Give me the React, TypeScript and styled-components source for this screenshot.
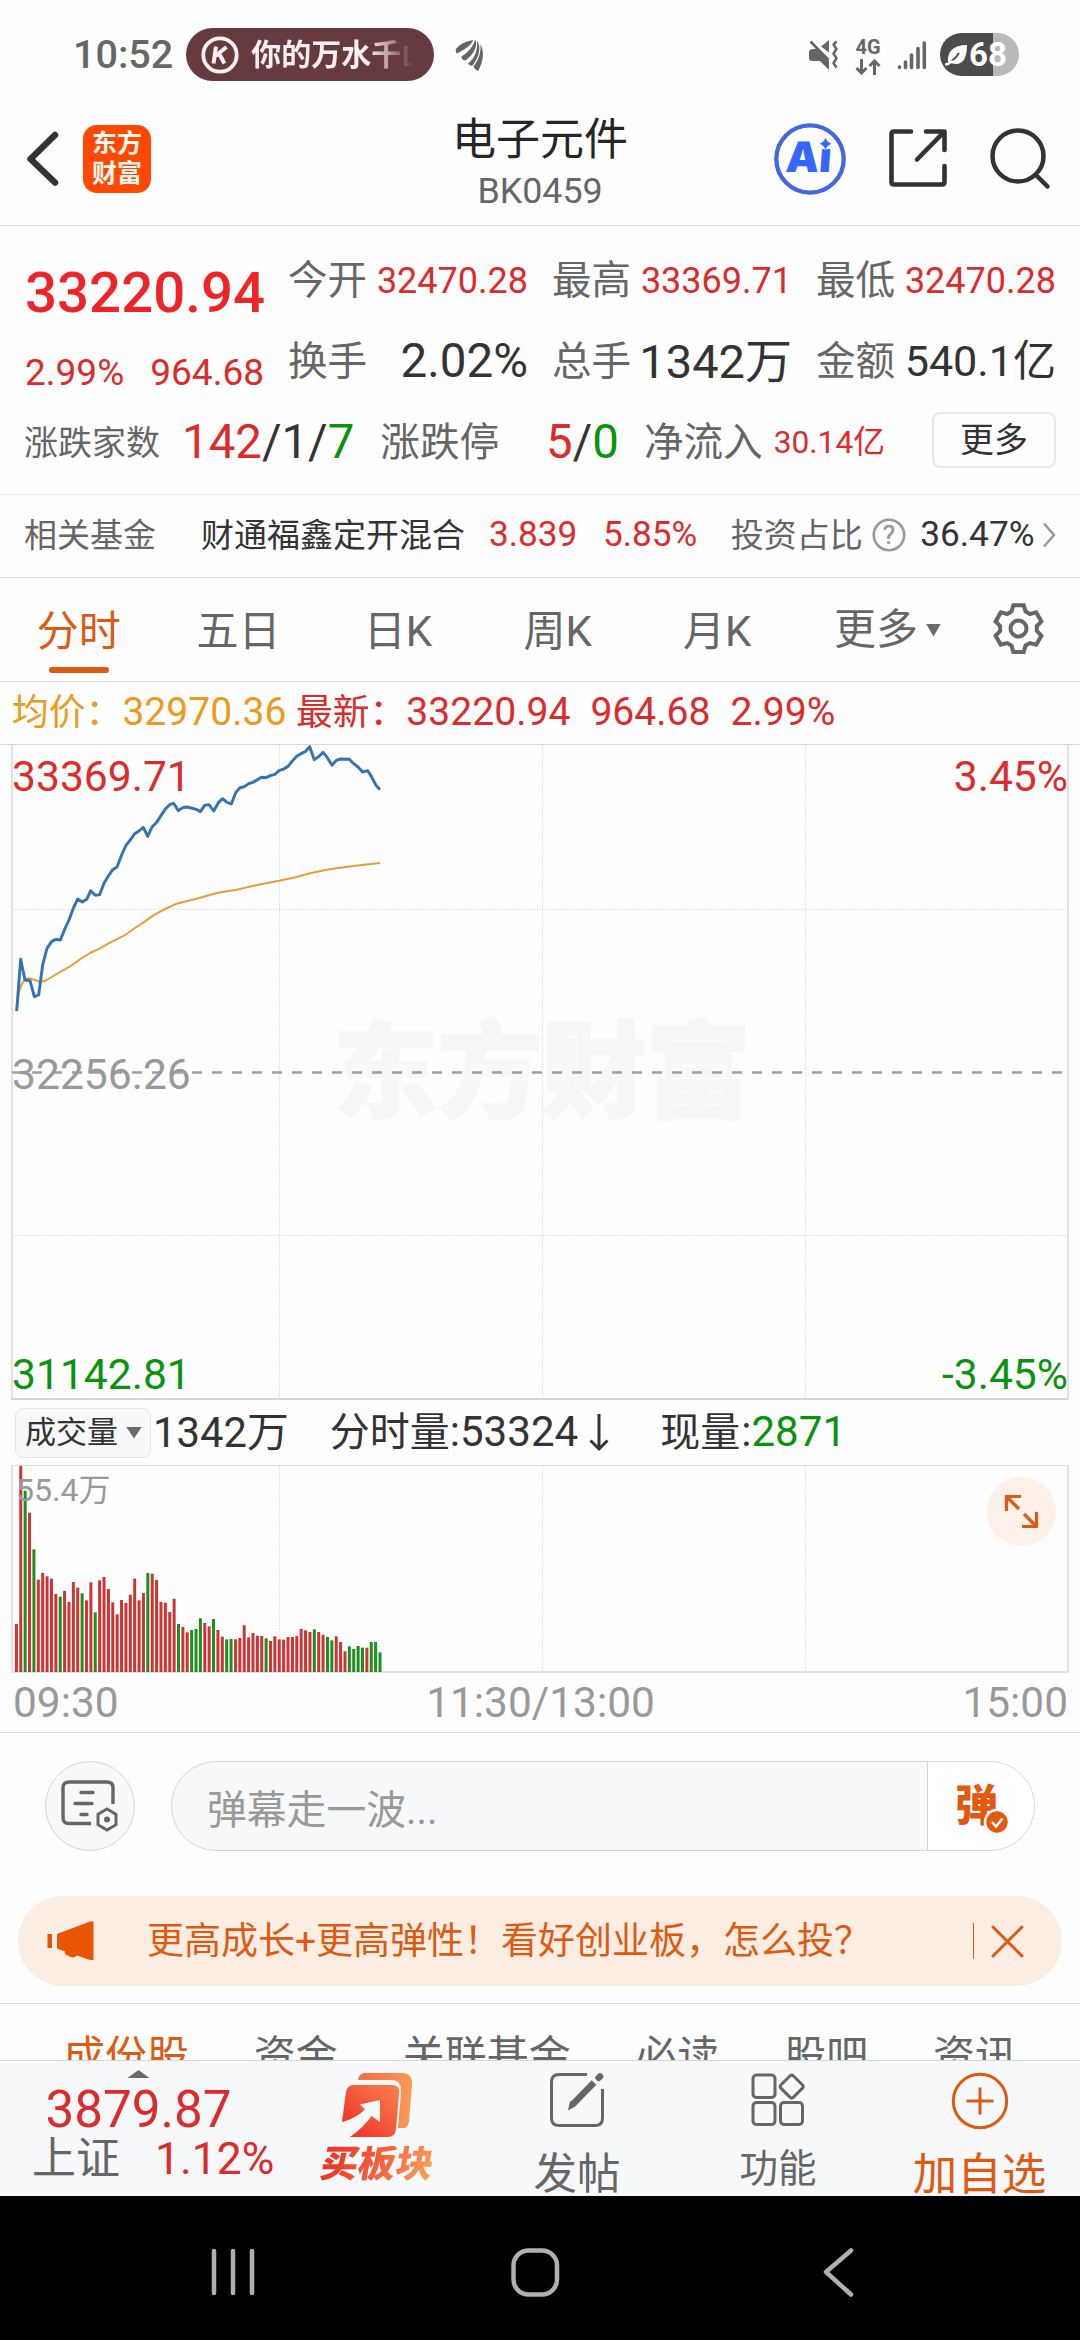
import React from "react";
import styled, { createGlobalStyle } from "styled-components";

const RED = "#dc2b2c";
const GREEN = "#0b930f";
const ORANGE = "#dd5a12";
const INK = "#333333";
const GREY = "#666666";
const MUTED = "#999999";
const LINE = "#d6d8da";

const GlobalStyle = createGlobalStyle`
  html, body { margin: 0; padding: 0; background: #fefefe; }
  *, *::before, *::after { box-sizing: border-box; }
  svg { display: block; flex: none; }
`;

const Screen = styled.main`
  width: 1080px;
  height: 2340px;
  display: flex;
  flex-direction: column;
  overflow: hidden;
  background: #fefefe;
  color: ${INK};
  font-family: Roboto, "Noto Sans CJK SC", sans-serif;
  line-height: 1;
  white-space: nowrap;
`;

const Txt = styled.span<{ $size: number; $color?: string; $weight?: number; $ml?: number; $dy?: number }>`
  flex: none;
  font-size: ${(p) => p.$size}px;
  color: ${(p) => p.$color ?? "inherit"};
  font-weight: ${(p) => p.$weight ?? 400};
  margin-left: ${(p) => p.$ml ?? 0}px;
  padding-top: ${(p) => p.$dy ?? 0}px;
`;

/* ---------- status bar ---------- */

const StatusBar = styled.div`
  height: 108px;
  flex: none;
  display: flex;
  align-items: center;
  padding: 1px 61px 0 73px;
  color: ${GREY};
`;

const NowPlaying = styled.div`
  width: 248px;
  height: 53px;
  margin-left: 13px;
  border-radius: 27px;
  background: #663a3f;
  display: flex;
  align-items: center;
  padding-left: 15px;
  gap: 12px;
`;

const SongTitle = styled.span`
  width: 163px;
  overflow: hidden;
  font-size: 30px;
  line-height: 40px;
  font-weight: 700;
  color: #fbeff2;
  mask-image: linear-gradient(90deg, #000 118px, transparent 162px);
`;

const StatusRight = styled.div`
  margin-left: auto;
  display: flex;
  align-items: center;
`;

const Network = styled.div`
  display: flex;
  flex-direction: column;
  align-items: center;
  gap: 2px;
  width: 28px;
  margin: 2px 15px 0 15px;
  font-size: 20px;
  font-weight: 700;
`;

const Battery = styled.div`
  width: 79px;
  height: 43px;
  margin-left: 13px;
  border-radius: 22px;
  background: linear-gradient(90deg, #4c4c4c 53.5px, #b9b9b9 53.5px);
  display: flex;
  align-items: center;
  padding-left: 5px;
  gap: 1px;
  color: #fff;
  font-size: 33px;
  font-weight: 700;
`;

/* ---------- title bar ---------- */

const TitleBar = styled.header`
  height: 118px;
  flex: none;
  display: grid;
  grid-template-columns: 1fr auto 1fr;
  border-bottom: 1px solid ${LINE};
`;

const TitleLeft = styled.div`
  display: flex;
  align-items: flex-start;
  padding: 17px 0 0 26px;
`;

const AppLogo = styled.div`
  width: 68px;
  height: 68px;
  margin-left: 23px;
  border-radius: 14px;
  background: #ff4800;
  color: #fff6f0;
  display: flex;
  flex-direction: column;
  align-items: center;
  padding-top: 4px;
  font-size: 25px;
  line-height: 30px;
  font-weight: 700;
`;

const TitleMiddle = styled.div`
  display: flex;
  flex-direction: column;
  align-items: center;
  padding-top: 10px;
  gap: 7px;
`;

const TitleRight = styled.div`
  display: flex;
  justify-content: flex-end;
  align-items: flex-start;
  padding: 14px 28px 0 0;
`;

/* ---------- quote summary ---------- */

const Summary = styled.section`
  height: 269px;
  flex: none;
  border-bottom: 1px solid #e8eaec;
`;

const SummaryTop = styled.div`
  height: 176px;
  display: grid;
  grid-template-columns: 239px 1fr;
  column-gap: 24px;
  padding: 14px 24px 0 25px;
`;

const PriceColumn = styled.div`
  display: flex;
  flex-direction: column;
  padding-top: 25px;
`;

const ChangeRow = styled.div`
  display: flex;
  justify-content: space-between;
  padding-top: 33px;
`;

const StatGrid = styled.div`
  display: grid;
  grid-template-columns: repeat(3, 240px);
  grid-template-rows: 81px 81px;
  column-gap: 24px;
`;

const StatCell = styled.div`
  display: flex;
  align-items: center;
  justify-content: space-between;
`;

const SummaryBottom = styled.div`
  height: 81px;
  display: flex;
  align-items: center;
  padding: 0 24px;
`;

const MoreButton = styled.button`
  width: 124px;
  height: 56px;
  margin: -5px 0 0 auto;
  padding: 0;
  border: 2px solid #e6e8eb;
  border-radius: 8px;
  background: transparent;
  color: ${INK};
  font: 400 34px/1 Roboto, "Noto Sans CJK SC", sans-serif;
`;

const FundRow = styled.div`
  height: 83px;
  flex: none;
  display: flex;
  align-items: center;
  padding: 0 24px 2px;
  border-bottom: 1px solid ${LINE};
`;

/* ---------- period tabs ---------- */

const PeriodTabs = styled.nav`
  height: 104px;
  flex: none;
  display: flex;
  border-bottom: 1px solid ${LINE};
`;

const PeriodTab = styled.div<{ $active?: boolean }>`
  width: 159.6px;
  flex: none;
  display: flex;
  flex-direction: column;
  align-items: center;
  padding: 33px 2px 0 0;
  font-size: 42px;
  color: ${(p) => (p.$active ? ORANGE : GREY)};
  &::after {
    content: "";
    width: 60px;
    height: 6px;
    margin-top: 14px;
    border-radius: 3px;
    background: ${(p) => (p.$active ? ORANGE : "transparent")};
  }
`;

const MorePeriods = styled.div`
  display: flex;
  align-items: center;
  height: 104px;
  gap: 8px;
  margin-left: 36px;
  font-size: 42px;
  color: ${GREY};
`;

const Triangle = styled.i<{ $w: number; $h: number; $up?: boolean }>`
  flex: none;
  width: ${(p) => p.$w}px;
  height: ${(p) => p.$h}px;
  background: #6b6b6b;
  clip-path: ${(p) => (p.$up ? "polygon(50% 0, 100% 100%, 0 100%)" : "polygon(0 0, 100% 0, 50% 100%)")};
`;

const GearSlot = styled.div`
  margin: 24px 35px 0 auto;
`;

/* ---------- charts ---------- */

const InfoRow = styled.div`
  height: 63px;
  flex: none;
  display: flex;
  align-items: center;
  padding-left: 12px;
  border-bottom: 1px solid ${LINE};
`;

const ChartBox = styled.div<{ $h: number }>`
  position: relative;
  flex: none;
  height: ${(p) => p.$h}px;
`;

const Overlay = styled.span<{ $top: number; $right?: boolean; $size?: number; $left?: number; $color: string }>`
  position: absolute;
  top: ${(p) => p.$top}px;
  ${(p) => (p.$right ? "right: 12px;" : `left: ${p.$left ?? 12}px;`)}
  font-size: ${(p) => p.$size ?? 42.6}px;
  color: ${(p) => p.$color};
`;

const Watermark = styled.span`
  position: absolute;
  top: 277px;
  left: 333px;
  font-size: 104.5px;
  font-weight: 900;
  color: #f7f7f7;
  -webkit-text-stroke: 2px #f7f7f7;
`;

const ChartSvg = styled.svg`
  position: absolute;
  inset: 0;
`;

const VolumeHeader = styled.div`
  height: 65px;
  flex: none;
  display: flex;
  align-items: center;
  padding-left: 15px;
`;

const IndicatorButton = styled.div`
  width: 136px;
  height: 50px;
  display: flex;
  align-items: center;
  gap: 8px;
  padding-left: 9px;
  border: 1px solid #e2e5ea;
  border-radius: 8px;
  background: #f7f8fa;
  font-size: 31px;
`;

const ExpandButton = styled.div`
  position: absolute;
  top: 12px;
  left: 987px;
  width: 69px;
  height: 69px;
  border-radius: 50%;
  background: #fff0e9;
  display: grid;
  place-items: center;
`;

const TimeAxis = styled.div`
  height: 60px;
  flex: none;
  display: grid;
  grid-template-columns: 1fr auto 1fr;
  align-items: center;
  padding: 1px 12px 0 13px;
  border-bottom: 1px solid ${LINE};
  font-size: 42.4px;
  color: ${MUTED};
  span:last-child {
    text-align: right;
  }
`;

/* ---------- comment bar and banner ---------- */

const CommentBar = styled.div`
  height: 163px;
  flex: none;
  display: flex;
  align-items: flex-start;
  padding: 28px 45px 0;
  gap: 36px;
`;

const RoundButton = styled.div`
  width: 90px;
  height: 90px;
  flex: none;
  border: 1px solid #d2d6da;
  border-radius: 50%;
  background: #f7f8fa;
  display: grid;
  place-items: center;
`;

const CommentField = styled.div`
  flex: 1;
  height: 90px;
  display: flex;
  overflow: hidden;
  border: 1px solid #d2d6da;
  border-radius: 45px;
  background: #f7f8fa;
`;

const Placeholder = styled.div`
  flex: 1;
  display: flex;
  align-items: center;
  padding: 9px 0 0 35px;
  font-size: 39.8px;
  color: ${MUTED};
`;

const DanmuToggle = styled.div`
  position: relative;
  width: 107px;
  border-left: 1px solid #d2d6da;
  background: #fff;
  padding: 23px 0 0 27px;
  font-size: 43px;
  font-weight: 900;
  color: #e2590f;
`;

const CheckBadge = styled.div`
  position: absolute;
  left: 55px;
  top: 46px;
`;

const Banner = styled.div`
  height: 90px;
  flex: none;
  margin: 0 18px 17px;
  border-radius: 45px;
  background: #fcede3;
  display: flex;
  align-items: center;
  padding: 0 38px 0 29px;
  color: ${ORANGE};
`;

const BannerRule = styled.i`
  width: 1px;
  height: 36px;
  margin: 0 17px 0 auto;
  background: ${ORANGE};
`;

const SectionTabs = styled.nav`
  height: 57px;
  flex: none;
  overflow: hidden;
  display: flex;
  align-items: flex-start;
  gap: 64.8px;
  padding: 32px 0 0 63px;
  border-top: 1px solid ${LINE};
  font-size: 42px;
  color: ${GREY};
`;

/* ---------- bottom bars ---------- */

const BottomBar = styled.footer`
  height: 136px;
  flex: none;
  display: flex;
  overflow: hidden;
  border-top: 1px solid ${LINE};
  background: #f7f8fa;
  color: ${GREY};
`;

const IndexPanel = styled.div`
  width: 277px;
  display: flex;
  flex-direction: column;
  align-items: center;
  padding-top: 9px;
`;

const IndexLine = styled.div`
  width: 100%;
  display: flex;
  align-items: center;
  padding-left: 32px;
  margin-top: 2px;
`;

const Action = styled.div<{ $w: number; $size: number; $gap: number; $color?: string }>`
  width: ${(p) => p.$w}px;
  display: flex;
  flex-direction: column;
  align-items: center;
  gap: ${(p) => p.$gap}px;
  padding-top: 11px;
  font-size: ${(p) => p.$size}px;
  color: ${(p) => p.$color ?? GREY};
`;

const BuyLabel = styled.span`
  font-size: 37.5px;
  font-weight: 900;
  transform: skewX(-10deg);
  background: linear-gradient(100deg, #ee3326 5%, #f2603f 50%, #fd9c56 95%);
  background-clip: text;
  -webkit-background-clip: text;
  color: transparent;
`;

const SystemNav = styled.div`
  flex: 1;
  display: flex;
  align-items: flex-start;
  padding: 52px 0 0 211px;
  background: #000;
`;

const Slot = styled.div<{ $ml?: number; $mt?: number }>`
  margin-left: ${(p) => p.$ml ?? 0}px;
  margin-top: ${(p) => p.$mt ?? 0}px;
`;

/* ---------- data ---------- */

const PRICE =
  "50,843 62,688 75,750 90,752 103,800 116,795 128,705 141,655 155,634 168,628 181,630 194,598 207,570 220,535 233,507 247,516 260,508 272,482 286,496 299,494 312,460 325,438 338,419 351,411 365,375 378,346 391,330 404,311 417,303 430,292 443,319 456,291 470,277 483,257 496,237 509,224 521,220 535,242 548,233 560,231 574,234 588,238 601,245 614,226 627,224 641,243 655,218 668,206 681,217 694,222 707,188 719,174 733,170 746,161 759,157 772,149 785,142 798,143 811,137 825,133 838,121 852,117 864,109 877,93 890,79 903,71 916,65 929,50 943,89 956,80 969,67 982,83 996,106 1009,91 1022,87 1048,88 1061,101 1074,111 1088,126 1103,122 1114,139 1127,164 1140,179";

const AVERAGE =
  "50,843 56,790 64,765 75,748 90,745 105,750 118,755 135,753 165,735 208,711 240,688 270,669 300,655 330,638 355,626 380,612 405,594 430,578 460,556 495,537 530,521 590,506 650,489 710,479 790,461 838,452 890,441 930,430 980,419 1030,412 1080,406 1140,399";

const VOLUME =
  "732r,258r,332g,398r,508g,599r,579r,589r,596r,642r,650g,633r,666r,606r,623r,640g,661r,607r,697g,601r,591r,627r,667r,703r,660r,669r,644r,596r,661r,639r,579g,581r,600r,666r,668r,696r,656r,732g,741r,757r,750g,747g,715g,729r,739r,717g,750r,770r,778g,777g,778r,774r,736r,772r,759r,767r,768r,775g,783r,769r,778r,779r,771r,771r,768r,747r,751r,756r,748g,756r,764r,771g,781g,769r,786r,814r,799g,807g,798g,803g,803r,786g,786g,817g"
    .split(",")
    .map((v) => ({ height: (876 - parseInt(v, 10)) / 3, up: v.endsWith("r") }));

const STATS = [
  { label: "今开", value: "32470.28", size: 36, color: RED },
  { label: "最高", value: "33369.71", size: 36, color: RED },
  { label: "最低", value: "32470.28", size: 36, color: RED },
  { label: "换手", value: "2.02%", size: 47.5, color: INK },
  { label: "总手", value: "1342万", size: 47, color: INK },
  { label: "金额", value: "540.1亿", size: 43.1, color: INK },
];

const GRID_X = [279.5, 542.5, 805.5];

/* ---------- icons ---------- */

const PlayerIcon = () => (
  <svg width="38" height="38" viewBox="0 0 38 38" fill="none" stroke="#fbeff2">
    <circle cx="19" cy="19" r="16.7" strokeWidth="3.8" />
    <path d="M15 10.5 12.5 27.5M25.5 11 14.5 20M18 17.5l5.5 10" strokeWidth="4" />
  </svg>
);

const WingIcon = () => (
  <svg width="30" height="34" viewBox="0 0 30 34" fill="#666">
    <path d="M1 11C5 5 13 3 18 2 17 7 9 12 2 15.500 .5 14.500 .5 12 1 11Z" />
    <path d="M6.500 18.500C12 15 18.500 9 20 1.500c3.500 5.500-1 15-9.500 21-2.500-.5-4.500-1.500-4-4Z" />
    <path d="M13 25.500c6.500-5 10-13 9-23 4.500 6 2.500 17-5 25.500-1.500-.5-3-1-4-2.500Z" />
    <path d="M18.500 28c5.500-6 7.500-14 7-22 4 8 3 18-2.500 27-2-1-4.500-3-4.500-5Z" />
  </svg>
);

const MutedIcon = () => (
  <svg width="31" height="30" viewBox="0 0 31 30">
    <path d="M1 11q1-2 4-2h4l12 12v9l-9-9H4q-3 0-3-3ZM13 6.500 21 0v12.500Z" fill="#666" />
    <path d="M2.500 1.500 20.500 20" stroke="#666" strokeWidth="2.600" />
    <path d="m28.500 1.500-3 3 3 4.500-3 4.500 3 5-3 4.500 3 4.500" fill="none" stroke="#666" strokeWidth="2.500" strokeLinejoin="round" />
  </svg>
);

const DataArrows = () => (
  <svg width="26" height="16" viewBox="0 0 26 16" fill="none" stroke="#666" strokeWidth="3">
    <path d="M6.500 0v14M1.500 9l5 5 5-5M19.500 16V2M14.500 7l5-5 5 5" />
  </svg>
);

const SignalIcon = () => (
  <svg width="30" height="30" viewBox="0 0 30 30" stroke="#666" strokeWidth="3.600" strokeLinecap="round">
    <path d="M2.500 27v.5M8.500 22v5.500M14.500 15v12.500M21 8.500v19M27.300 3v24.500" />
  </svg>
);

const LeafIcon = () => (
  <svg width="23" height="22" viewBox="0 0 23 22">
    <path d="M3 18C2 8 8 1 22 1c0 11-3 19-11 19-3 0-5-1-6-2Z" fill="#fff" />
    <path d="M6 17.500C9 15.500 12 12.500 14 9" fill="none" stroke="#4c4c4c" strokeWidth="2" />
    <path d="M1 20.500c2-.5 4-1.500 6-3" fill="none" stroke="#fff" strokeWidth="2.500" strokeLinecap="round" />
  </svg>
);

const AiIcon = () => (
  <svg width="74" height="74" viewBox="0 0 74 74">
    <circle cx="37" cy="37" r="33.700" fill="none" stroke="#4366e3" strokeWidth="4.300" />
    <text x="12" y="50.500" fontFamily="Inter, Roboto, sans-serif" fontSize="42" fontWeight="900" fill="#3566ff" transform="skewX(-4) translate(3.500 0)">Ai</text>
    <circle cx="52.500" cy="19.500" r="8" fill="#fefefe" />
    <path d="M52.500 15.700q1.500 4.500 6 6-4.500 1.500-6 6-1.500-4.500-6-6 4.500-1.500 6-6Z" fill="#3566ff" />
  </svg>
);

const ShareIcon = () => (
  <svg width="60" height="60" viewBox="0 0 60 60" fill="none" stroke="#333" strokeWidth="4.600" strokeLinecap="round" strokeLinejoin="round">
    <path d="M23 3.500H6q-2.500 0-2.500 2.500v48q0 2.500 2.500 2.500h48q2.500 0 2.500-2.500V38M38 3.500h18.500V22M56 4 29 31.500" />
  </svg>
);

const SearchIcon = () => (
  <svg width="62" height="62" viewBox="0 0 62 62" fill="none" stroke="#333" strokeWidth="4.500" strokeLinecap="round">
    <circle cx="28" cy="28" r="25.500" />
    <path d="m46.500 47.500 11 11" />
  </svg>
);

const GearIcon = () => (
  <svg width="53" height="53" viewBox="0 0 53 53" fill="none" stroke="#666" strokeWidth="4" strokeLinejoin="miter">
    <path d="M21.300 3.200h10.400l1.800 6.300 4.300 2.500 6.400-1.600 5.200 9-4.600 4.700v4.900l4.600 4.700-5.200 9-6.400-1.600-4.300 2.500-1.800 6.300H21.300l-1.800-6.300-4.300-2.500-6.400 1.600-5.200-9L8.200 29v-4.900l-4.600-4.700 5.200-9 6.400 1.600 4.300-2.500Z" />
    <circle cx="26.500" cy="26.500" r="8" />
  </svg>
);

const HelpIcon = () => (
  <svg width="34" height="34" viewBox="0 0 34 34">
    <circle cx="17" cy="17" r="15.200" fill="none" stroke="#999" strokeWidth="2.600" />
    <text x="17" y="26" textAnchor="middle" fontFamily="Roboto, sans-serif" fontSize="26" fill="#999" stroke="#999" strokeWidth=".5">?</text>
  </svg>
);

const ExpandIcon = () => (
  <svg width="35" height="35" viewBox="0 0 35 35" fill="none" stroke="#dd5a12" strokeWidth="3.200">
    <path d="M17 2.500H2.500V17M2.500 2.500l12.500 12.500M18 32.500h14.500V18M32.500 32.500 20 20" />
  </svg>
);

const ListSettingsIcon = () => (
  <svg width="58" height="52" viewBox="0 0 58 52" fill="none" stroke="#666" strokeWidth="3.400">
    <path d="M30 43.500H8q-6 0-6-6V8q0-6 6-6h38q6 0 6 6v16" />
    <path d="M20 12.500h12M14 23.500h17M20 34.500h6" strokeLinecap="round" />
    <path d="m46 29 9 5.300v10.400L46 50l-9-5.300V34.300Z" strokeWidth="3" />
    <circle cx="46" cy="39.500" r="3" fill="#666" stroke="none" />
  </svg>
);

const MegaphoneIcon = () => (
  <svg width="48" height="40" viewBox="0 0 48 40" fill="#ea5504">
    <path d="M.5 13H5v14H.5ZM10 13 43 .5h3.500V39H43l-13-4.500q-4 4-9 0-4-1-3-4L10 27.500Z" />
  </svg>
);

const CloseIcon = () => (
  <svg width="33" height="33" viewBox="0 0 33 33" stroke="#dd5a12" strokeWidth="3" strokeLinecap="round">
    <path d="m2 2 29 29M31 2 2 31" />
  </svg>
);

const BuySectorIcon = () => (
  <svg width="72" height="66" viewBox="0 0 72 66">
    <defs>
      <linearGradient id="buy" x1="0" y1="1" x2="1" y2="0">
        <stop offset="0" stopColor="#ee2b23" />
        <stop offset="1" stopColor="#f7834f" />
      </linearGradient>
      <linearGradient id="back" x1="0" y1="0" x2="1" y2="0">
        <stop offset="0" stopColor="#f26a44" />
        <stop offset="1" stopColor="#fd9a55" />
      </linearGradient>
    </defs>
    <path d="M17 8q1-7 7-7h37q11 0 10 12l-3 36q-1 8-7 7h-4l3-35q1-13-10-13Z" fill="url(#back)" />
    <path d="M5 20q1-7 8-7h38q8 0 7 8l-3 36q-1 8-8 8H9q14-10 21.500-21l8.500 6V28l-20 4.500 5 5Q14 47 1 50Z" fill="url(#buy)" />
  </svg>
);

const ComposeIcon = () => (
  <svg width="56" height="56" viewBox="0 0 56 56" fill="none" stroke="#666" strokeWidth="3">
    <path d="M38 2.500H10q-7.500 0-7.500 7.500v36q0 7.500 7.500 7.500h36q7.500 0 7.500-7.500V17" />
    <path d="M45 10.500 24 32" strokeWidth="6.500" />
    <path d="m21 29 6 5-8 4.500Z" fill="#666" stroke="none" />
    <path d="m49.500 6 1.500-1.500" strokeWidth="6.500" strokeLinecap="round" />
    <path d="m44 5.500 6 6" stroke="#f7f8fa" strokeWidth="1.500" />
  </svg>
);

const GridIcon = () => (
  <svg width="54" height="54" viewBox="0 0 54 54" fill="none" stroke="#666" strokeWidth="3" strokeLinejoin="round">
    <rect x="2" y="3" width="22" height="22.500" rx="3.500" />
    <rect x="2" y="30.500" width="22" height="22" rx="3.500" />
    <rect x="29.500" y="30.500" width="22" height="22" rx="3.500" />
    <rect x="32" y="5.800" width="17.500" height="17.500" rx="2.500" transform="rotate(45 40.700 14.500)" />
  </svg>
);

const AddIcon = () => (
  <svg width="58" height="58" viewBox="0 0 58 58" fill="none" stroke="#dd5a12" strokeWidth="3">
    <circle cx="29" cy="29" r="26.700" />
    <path d="M29 15.500v27M15.500 29h27" />
  </svg>
);

/* ---------- chart drawings ---------- */

const PriceChart = () => (
  <ChartSvg width="1080" height="655" viewBox="0 0 1080 655" fill="none">
    <g stroke="#dcdcdc" strokeWidth="1" strokeDasharray="1.500 1.500">
      {GRID_X.map((x) => (
        <path key={x} d={`M${x} 0V653`} />
      ))}
      <path d="M12 164.500H1068M12 490.500H1068" />
    </g>
    <path d="M12 0V654M1068 0V654" stroke="#e2e2e2" strokeWidth="2" />
    <path d="M11 654H1068" stroke="#d6d6d6" strokeWidth="2" />
    <path d="M12 327.500H1068" stroke="#a0a0a0" strokeWidth="2.600" strokeDasharray="10 10" />
    <g transform="translate(0 -15) scale(.33333)" strokeLinejoin="round">
      <polyline points={AVERAGE} stroke="#e3a03a" strokeWidth="6" />
      <polyline points={PRICE} stroke="#3572b0" strokeWidth="8.800" />
    </g>
  </ChartSvg>
);

const VolumeChart = () => (
  <ChartSvg width="1080" height="208" viewBox="0 0 1080 208" fill="none">
    <g stroke="#dcdcdc" strokeWidth="1" strokeDasharray="1.500 1.500">
      {GRID_X.map((x) => (
        <path key={x} d={`M${x} 1V206`} />
      ))}
    </g>
    <path d="M12 .5H1068" stroke="#dedede" />
    <path d="M12 0V207M1068 0V207M11 207H1069" stroke="#e2e2e2" strokeWidth="2" />
    {VOLUME.map((bar, i) => (
      <rect
        key={i}
        x={14.900 + i * 4.381}
        y={207 - bar.height}
        width="3"
        height={bar.height}
        fill={bar.up ? "#cf3434" : "#1e8f1e"}
      />
    ))}
  </ChartSvg>
);

/* ---------- page ---------- */

export default function App() {
  return (
    <Screen>
      <GlobalStyle />

      <StatusBar>
        <Txt $size={39.5} $weight={500}>10:52</Txt>
        <NowPlaying>
          <PlayerIcon />
          <SongTitle>你的万水千山</SongTitle>
        </NowPlaying>
        <Slot $ml={21}>
          <WingIcon />
        </Slot>
        <StatusRight>
          <MutedIcon />
          <Network>
            4G
            <DataArrows />
          </Network>
          <SignalIcon />
          <Battery>
            <LeafIcon />
            68
          </Battery>
        </StatusRight>
      </StatusBar>

      <TitleBar>
        <TitleLeft>
          <svg width="34" height="68" viewBox="0 0 34 68" fill="none" stroke="#333" strokeWidth="6.500" strokeLinecap="round" strokeLinejoin="round">
            <path d="M29 10 4.500 34 29 57.500" />
          </svg>
          <AppLogo>
            <span>东方</span>
            <span>财富</span>
          </AppLogo>
        </TitleLeft>
        <TitleMiddle>
          <Txt $size={44} $color="#262626">电子元件</Txt>
          <Txt $size={35.800} $color={GREY} $dy={5}>BK0459</Txt>
        </TitleMiddle>
        <TitleRight>
          <AiIcon />
          <Slot $ml={41} $mt={6}>
            <ShareIcon />
          </Slot>
          <Slot $ml={42} $mt={6}>
            <SearchIcon />
          </Slot>
        </TitleRight>
      </TitleBar>

      <Summary>
        <SummaryTop>
          <PriceColumn>
            <Txt $size={56.400} $weight={500} $color="#ee2426">33220.94</Txt>
            <ChangeRow>
              <Txt $size={37} $color={RED}>2.99%</Txt>
              <Txt $size={37} $color={RED}>964.68</Txt>
            </ChangeRow>
          </PriceColumn>
          <StatGrid>
            {STATS.map((s) => (
              <StatCell key={s.label}>
                <Txt $size={39.6} $color={GREY}>{s.label}</Txt>
                <Txt $size={s.size} $color={s.color}>{s.value}</Txt>
              </StatCell>
            ))}
          </StatGrid>
        </SummaryTop>
        <SummaryBottom>
          <Txt $size={34} $color={GREY}>涨跌家数</Txt>
          <Txt $size={47.4} $ml={22}>
            <Txt $size={47.4} $color={RED}>142</Txt>/1/<Txt $size={47.4} $color={GREEN}>7</Txt>
          </Txt>
          <Txt $size={39.6} $color={GREY} $ml={26}>涨跌停</Txt>
          <Txt $size={47.4} $ml={47}>
            <Txt $size={47.4} $color={RED}>5</Txt>/<Txt $size={47.4} $color={GREEN}>0</Txt>
          </Txt>
          <Txt $size={39.6} $color={GREY} $ml={25}>净流入</Txt>
          <Txt $size={31.7} $color={RED} $ml={11}>30.14亿</Txt>
          <MoreButton>更多</MoreButton>
        </SummaryBottom>
      </Summary>

      <FundRow>
        <Txt $size={33} $color={GREY}>相关基金</Txt>
        <Txt $size={33} $ml={45}>财通福鑫定开混合</Txt>
        <Txt $size={35.200} $color={RED} $ml={24}>3.839</Txt>
        <Txt $size={35.200} $color={RED} $ml={25.500}>5.85%</Txt>
        <Txt $size={33} $color={GREY} $ml={33.500}>投资占比</Txt>
        <Slot $ml={9}>
          <HelpIcon />
        </Slot>
        <Txt $size={35.200} $ml={14.500}>36.47%</Txt>
        <Slot $ml={8}>
          <svg width="14" height="26" viewBox="0 0 14 26" fill="none" stroke="#999" strokeWidth="2.500">
            <path d="m2 1.500 10 11.500L2 24.500" />
          </svg>
        </Slot>
      </FundRow>

      <PeriodTabs>
        <PeriodTab $active>分时</PeriodTab>
        <PeriodTab>五日</PeriodTab>
        <PeriodTab>日K</PeriodTab>
        <PeriodTab>周K</PeriodTab>
        <PeriodTab>月K</PeriodTab>
        <MorePeriods>
          更多
          <Triangle $w={15} $h={13} />
        </MorePeriods>
        <GearSlot>
          <GearIcon />
        </GearSlot>
      </PeriodTabs>

      <InfoRow>
        <Txt $size={36.800} $color="#eb9a1c">均价：</Txt>
        <Txt $size={39.100} $color="#eb9a1c">32970.36</Txt>
        <Txt $size={36.800} $color={RED} $ml={9.500}>最新：</Txt>
        <Txt $size={39.100} $color={RED}>33220.94</Txt>
        <Txt $size={39.100} $color={RED} $ml={20}>964.68</Txt>
        <Txt $size={39.100} $color={RED} $ml={20}>2.99%</Txt>
      </InfoRow>

      <ChartBox $h={655}>
        <Watermark>东方财富</Watermark>
        <PriceChart />
        <Overlay $top={10} $color={RED}>33369.71</Overlay>
        <Overlay $top={10} $right $color={RED}>3.45%</Overlay>
        <Overlay $top={308} $color={MUTED}>32256.26</Overlay>
        <Overlay $top={608} $color={GREEN}>31142.81</Overlay>
        <Overlay $top={608} $right $color={GREEN}>-3.45%</Overlay>
      </ChartBox>

      <VolumeHeader>
        <IndicatorButton>
          成交量
          <Triangle $w={16} $h={12} />
        </IndicatorButton>
        <Txt $size={41.800} $ml={2}>1342万</Txt>
        <Txt $size={40} $ml={41}>分时量</Txt>
        <Txt $size={42.100}>:53324</Txt>
        <Slot $ml={11}>
          <svg width="20" height="38" viewBox="0 0 20 38" fill="none" stroke="#333" strokeWidth="3">
            <path d="M10 0v35M1.500 26.500 10 35l8.500-8.500" />
          </svg>
        </Slot>
        <Txt $size={40} $ml={51}>现量</Txt>
        <Txt $size={42.100} $ml={1}>:</Txt>
        <Txt $size={42.100} $color={GREEN}>2871</Txt>
      </VolumeHeader>

      <ChartBox $h={208}>
        <VolumeChart />
        <Overlay $top={9} $left={16} $size={32} $color={MUTED}>55.4万</Overlay>
        <ExpandButton>
          <ExpandIcon />
        </ExpandButton>
      </ChartBox>

      <TimeAxis>
        <span>09:30</span>
        <span>11:30/13:00</span>
        <span>15:00</span>
      </TimeAxis>

      <CommentBar>
        <RoundButton>
          <ListSettingsIcon />
        </RoundButton>
        <CommentField>
          <Placeholder>弹幕走一波...</Placeholder>
          <DanmuToggle>
            弹
            <CheckBadge>
              <svg width="28" height="28" viewBox="0 0 28 28" fill="none">
                <circle cx="14" cy="14" r="12" fill="#e2590f" stroke="#fff" strokeWidth="2.500" />
                <path d="m9 14 4 4.500 6.500-8" stroke="#fff" strokeWidth="2.500" />
              </svg>
            </CheckBadge>
          </DanmuToggle>
        </CommentField>
      </CommentBar>

      <Banner>
        <MegaphoneIcon />
        <Txt $size={37} $ml={52}>更高成长+更高弹性！看好创业板，怎么投？</Txt>
        <BannerRule />
        <CloseIcon />
      </Banner>

      <SectionTabs>
        <Txt $size={42} $color={ORANGE}>成份股</Txt>
        <span>资金</span>
        <span>关联基金</span>
        <span>必读</span>
        <span>股吧</span>
        <span>资讯</span>
      </SectionTabs>

      <BottomBar>
        <IndexPanel>
          <Triangle $w={22} $h={8} $up />
          <Txt $size={51.200} $color={RED} $dy={6}>3879.87</Txt>
          <IndexLine>
            <Txt $size={44}>上证</Txt>
            <Txt $size={44.5} $color={RED} $ml={35}>1.12%</Txt>
          </IndexLine>
        </IndexPanel>
        <Action $w={200} $size={37} $gap={8}>
          <BuySectorIcon />
          <BuyLabel>买板块</BuyLabel>
        </Action>
        <Action $w={200} $size={43.5} $gap={25}>
          <ComposeIcon />
          发帖
        </Action>
        <Action $w={202} $size={38.500} $gap={24}>
          <GridIcon />
          功能
        </Action>
        <Action $w={201} $size={44.5} $gap={23} $color={ORANGE}>
          <AddIcon />
          加自选
        </Action>
      </BottomBar>

      <SystemNav>
        <svg width="44" height="48" viewBox="0 0 44 48" stroke="#b0b0b0" strokeWidth="4.500" strokeLinecap="round">
          <path d="M3 3v42M22 3v42M41 3v42" />
        </svg>
        <Slot $ml={255}>
          <svg width="50" height="50" viewBox="0 0 50 50" fill="none" stroke="#b0b0b0" strokeWidth="4.500">
            <rect x="3.500" y="2.500" width="43.500" height="44" rx="15" />
          </svg>
        </Slot>
        <Slot $ml={262}>
          <svg width="34" height="50" viewBox="0 0 34 50" fill="none" stroke="#b0b0b0" strokeWidth="4.500" strokeLinecap="round" strokeLinejoin="round">
            <path d="M29 2.500 4 24l25 22.500" />
          </svg>
        </Slot>
      </SystemNav>
    </Screen>
  );
}
